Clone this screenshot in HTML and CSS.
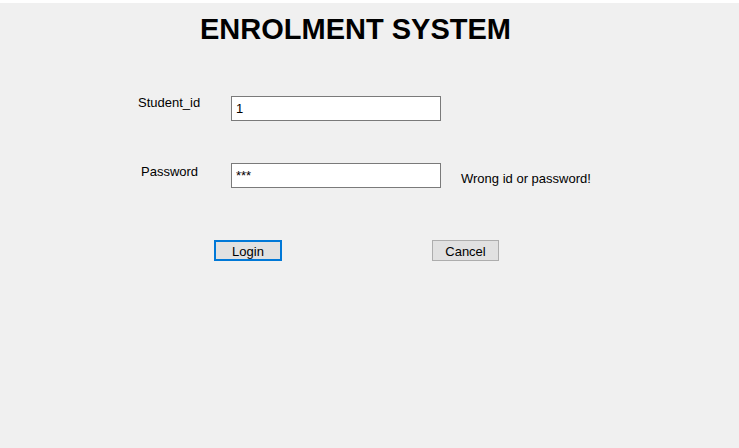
FILE: index.html
```html
<!DOCTYPE html>
<html>
<head>
<meta charset="utf-8">
<link rel="stylesheet" href="styles.css">
<title>Enrolment System</title>
</head>
<body>
<div class="window">
  <h1 class="title">ENROLMENT SYSTEM</h1>
  <div class="row row-id">
    <label class="label">Student_id</label>
    <input class="field" type="text" value="1">
  </div>
  <div class="row row-pw">
    <label class="label label-pw">Password</label>
    <input class="field" type="text" value="***">
    <span class="message">Wrong id or password!</span>
  </div>
  <div class="buttons">
    <button class="btn btn-login">Login</button>
    <button class="btn btn-cancel">Cancel</button>
  </div>
</div>
</body>
</html>
```
FILE: styles.css
```css
html, body {
  margin: 0;
  padding: 0;
  background: #f0f0f0;
}
.window {
  box-sizing: border-box;
  width: 739px;
  height: 448px;
  border-top: 3px solid #ffffff;
  background: #f0f0f0;
  font-family: "Liberation Sans", Arial, sans-serif;
  font-size: 13px;
  color: #000;
  display: flex;
  flex-direction: column;
}
.title {
  margin: 10px 0 0 200px;
  font-size: 29px;
  line-height: 32px;
  font-weight: bold;
  letter-spacing: 0;
}
.row {
  display: grid;
  grid-template-columns: 93px 210px auto;
  align-items: start;
  padding-left: 138px;
}
.row-id { margin-top: 51px; }
.row-pw { margin-top: 42px; }
.label {
  line-height: 13px;
}
.label-pw {
  margin-top: 2px;
  padding-left: 3px;
}
.field {
  box-sizing: border-box;
  width: 210px;
  height: 25px;
  margin: 0;
  padding: 0 4px;
  border: 1px solid #7a7a7a;
  background: #fff;
  font-family: "Liberation Sans", Arial, sans-serif;
  font-size: 13px;
  color: #000;
  outline: none;
}
.message {
  margin: 9px 0 0 20px;
  line-height: 13px;
}
.buttons {
  display: flex;
  gap: 150px;
  padding-left: 214px;
  margin-top: 52px;
}
.btn {
  box-sizing: border-box;
  height: 21px;
  margin: 0;
  padding: 2px 0 0;
  background: #e1e1e1;
  border: 1px solid #adadad;
  border-radius: 0;
  font-family: "Liberation Sans", Arial, sans-serif;
  font-size: 13px;
  line-height: 17px;
  color: #000;
}
.btn-login {
  width: 68px;
  border: 2px solid #0078d7;
  padding-top: 2px;
  line-height: 15px;
}
.btn-cancel {
  width: 67px;
}
```
